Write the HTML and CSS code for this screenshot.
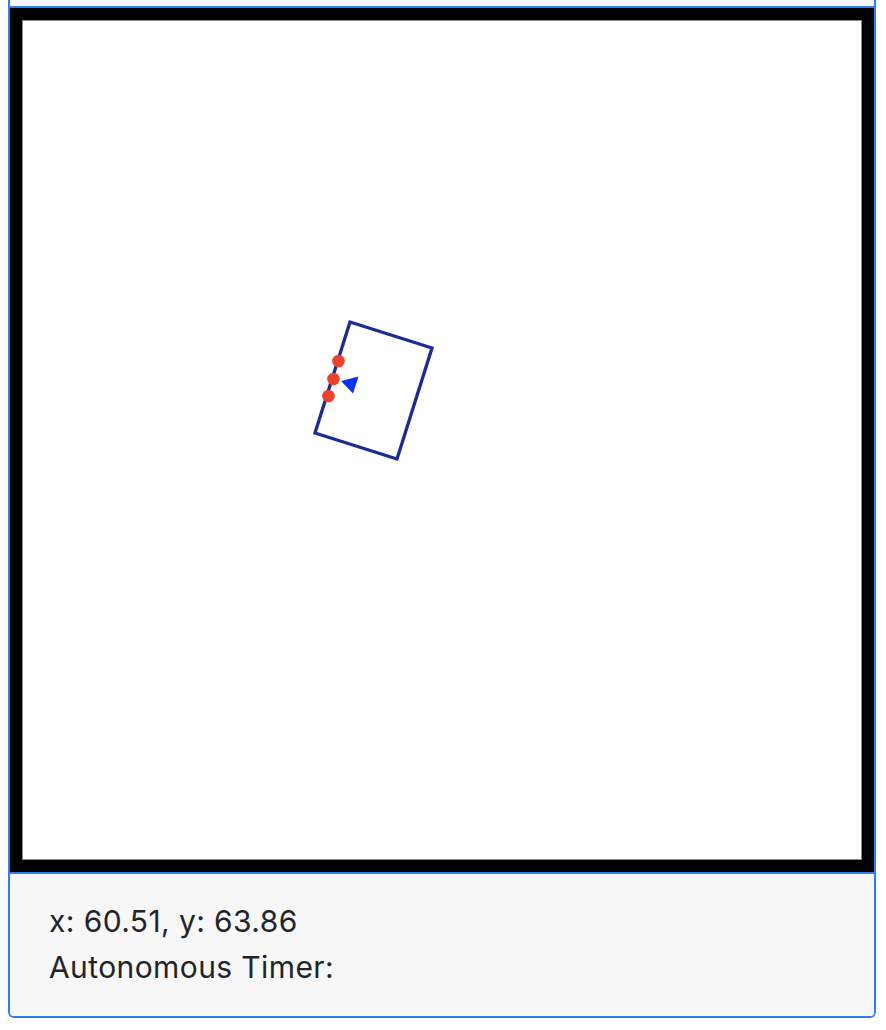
FILE: index.html
```html
<!DOCTYPE html>
<html>
<head>
<meta charset="utf-8">
<link rel="stylesheet" href="styles.css">
</head>
<body>
<div class="card">
  <div class="card-header"></div>
  <div class="field">
    <svg class="field-svg" viewBox="22 20 840 840" xmlns="http://www.w3.org/2000/svg">
      <polygon points="350,322 432,348 397,459 315,433" fill="none" stroke="#1c2a94" stroke-width="3.3" stroke-linejoin="miter"/>
      <circle cx="338.5" cy="361" r="6.3" fill="#ea4130"/>
      <circle cx="333.5" cy="379" r="6.3" fill="#ea4130"/>
      <circle cx="328.5" cy="396" r="6.3" fill="#ea4130"/>
      <polygon points="341,381 358.5,376.5 353,393.5" fill="#0a30ff"/>
    </svg>
  </div>
  <div class="card-footer">
    <div class="line">x: 60.51, y: 63.86</div>
    <div class="line">Autonomous Timer:</div>
  </div>
</div>
</body>
</html>
```
FILE: styles.css
```css
html, body {
  margin: 0;
  padding: 0;
  background: #ffffff;
}
body {
  font-family: Inter, "Liberation Sans", sans-serif;
  color: #212529;
}
.card {
  margin-left: 8px;
  width: 864px;
  border: 2px solid #2f7ef6;
  border-top: none;
  border-radius: 0 0 6px 6px;
  overflow: hidden;
}
.card-header {
  height: 6px;
  background: #f7f7f7;
  border-bottom: 2px solid #2f7ef6;
}
.field {
  width: 840px;
  height: 840px;
  border: 12px solid #000;
  background: #fff;
  box-shadow: inset 0 0 0 1px #8a8a8a;
}
.field-svg {
  display: block;
  width: 840px;
  height: 840px;
}
.card-footer {
  background: #f7f7f7;
  border-top: 2px solid #2f7ef6;
  height: 144px;
  box-sizing: border-box;
  padding: 24px 0 0 39px;
  font-size: 30px;
  line-height: 46px;
  letter-spacing: 0.4px;
}
```
